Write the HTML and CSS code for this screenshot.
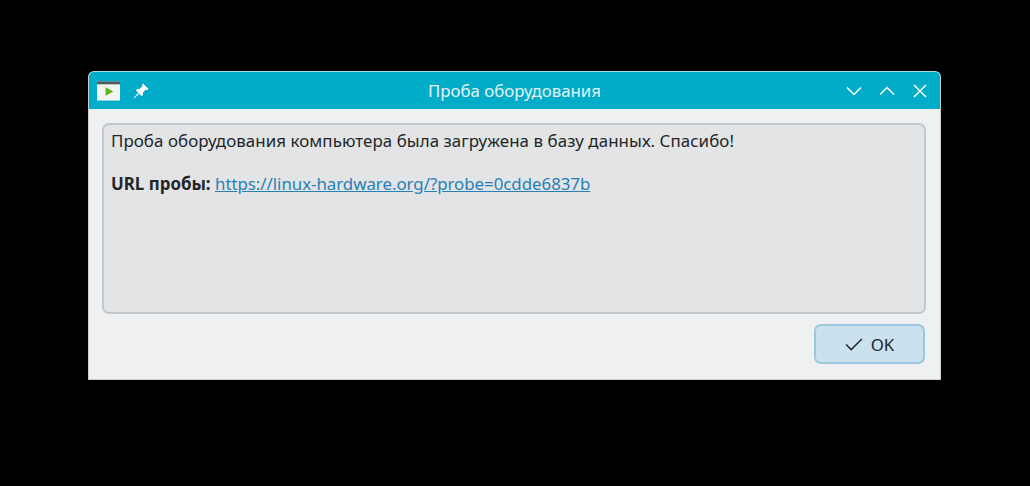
FILE: index.html
```html
<!DOCTYPE html>
<html lang="ru">

<head>
  <meta charset="UTF-8">
  <title>Проба оборудования</title>
  <link rel="stylesheet" href="styles.css">
</head>

<body>
  <div class="window">
    <header class="titlebar">
      <div class="title-left">
        <svg class="app-icon" viewBox="0 0 24 20">
          <rect x="0" y="0" width="24" height="20" fill="#f4f6f4" />
          <rect x="0" y="0" width="24" height="3" fill="#4d5a60" />
          <path d="M9 6v9l8-4.500z" fill="#5fb31c" />
        </svg>
        <svg class="pin-icon" viewBox="0 0 16 16">
          <path d="M10 .5l5.500 5.500-1.500 1.200-1.200-.7-2.800 3v2.500L8.500 13 3 7.500 4 6h2.500l3-2.800L9 2z" fill="#fff" />
          <path d="M5 10L.5 15l.5.500 5-4.500z" fill="#fff" />
        </svg>
      </div>
      <h1 class="title">Проба оборудования</h1>
      <div class="title-buttons">
        <svg viewBox="0 0 16 16"><path d="M1 4.500l7 7 7-7" /></svg>
        <svg viewBox="0 0 16 16"><path d="M1 11.500l7-7 7 7" /></svg>
        <svg viewBox="0 0 16 16"><path d="M2 2l12 12M14 2L2 14" /></svg>
      </div>
    </header>

    <main class="content">
      <div class="message">
        <p class="thanks">Проба оборудования компьютера была загружена в базу данных. Спасибо!</p>
        <p><b>URL пробы:</b> <a href="#">https://linux-hardware.org/?probe=0cdde6837b</a></p>
      </div>
      <div class="actions">
        <button class="ok">
          <svg viewBox="0 0 16 16"><path d="M1 8.500l4.500 4.500L15 3.500" /></svg>
          OK
        </button>
      </div>
    </main>
  </div>
</body>

</html>
```

FILE: styles.css
```css
html,
body {
  margin: 0;
  height: 100%;
  background: #000;
}

body {
  padding: 71px 89px 0 88px;
  box-sizing: border-box;
  font-family: "Noto Sans", sans-serif;
  font-size: 16.9px;
  color: #232629;
}

.window {
  height: 309px;
  box-sizing: border-box;
  display: flex;
  flex-direction: column;
  background: #eff0f1;
  border: 1px solid #c9ced1;
  border-top-color: #9fdbe6;
  border-radius: 6px 6px 0 0;
  overflow: hidden;
}

.titlebar {
  height: 37px;
  flex: none;
  display: grid;
  grid-template-columns: 1fr auto 1fr;
  align-items: center;
  background: #00acc8;
  color: #e4f3f6;
}

.title-left {
  display: flex;
  align-items: center;
  gap: 13px;
  padding-left: 8px;
}

.app-icon {
  width: 23px;
  height: 20px;
}

.pin-icon {
  width: 16px;
  height: 16px;
}

.title {
  margin: 0;
  font-size: 16.8px;
  font-weight: 400;
}

.title-buttons {
  display: flex;
  justify-content: flex-end;
  gap: 17px;
  padding-right: 12px;
}

.title-buttons svg {
  width: 16px;
  height: 16px;
  fill: none;
  stroke: #fff;
  stroke-width: 1.5;
}

.content {
  flex: 1;
  display: flex;
  flex-direction: column;
  padding: 14px 14px 15px 13px;
  gap: 10px;
}

.message {
  flex: 1;
  padding: 5px 7px;
  background: #e2e4e6;
  border: 2px solid #c3c6c9;
  border-radius: 7px;
  line-height: 22px;
}

.message p {
  margin: 0 0 21px;
}

.message .thanks {
  letter-spacing: 0.06px;
}

.message a {
  color: #2980b9;
  letter-spacing: -0.05px;
}

.actions {
  display: flex;
  justify-content: flex-end;
  padding-right: 1px;
}

.ok {
  width: 111px;
  height: 40px;
  display: flex;
  align-items: center;
  justify-content: center;
  gap: 8px;
  padding: 0;
  font: inherit;
  color: #232629;
  background: #cae2f0;
  border: 2px solid #9dc7df;
  border-radius: 7px;
}

.ok svg {
  width: 18px;
  height: 18px;
  fill: none;
  stroke: #232629;
  stroke-width: 1.3;
}
```
